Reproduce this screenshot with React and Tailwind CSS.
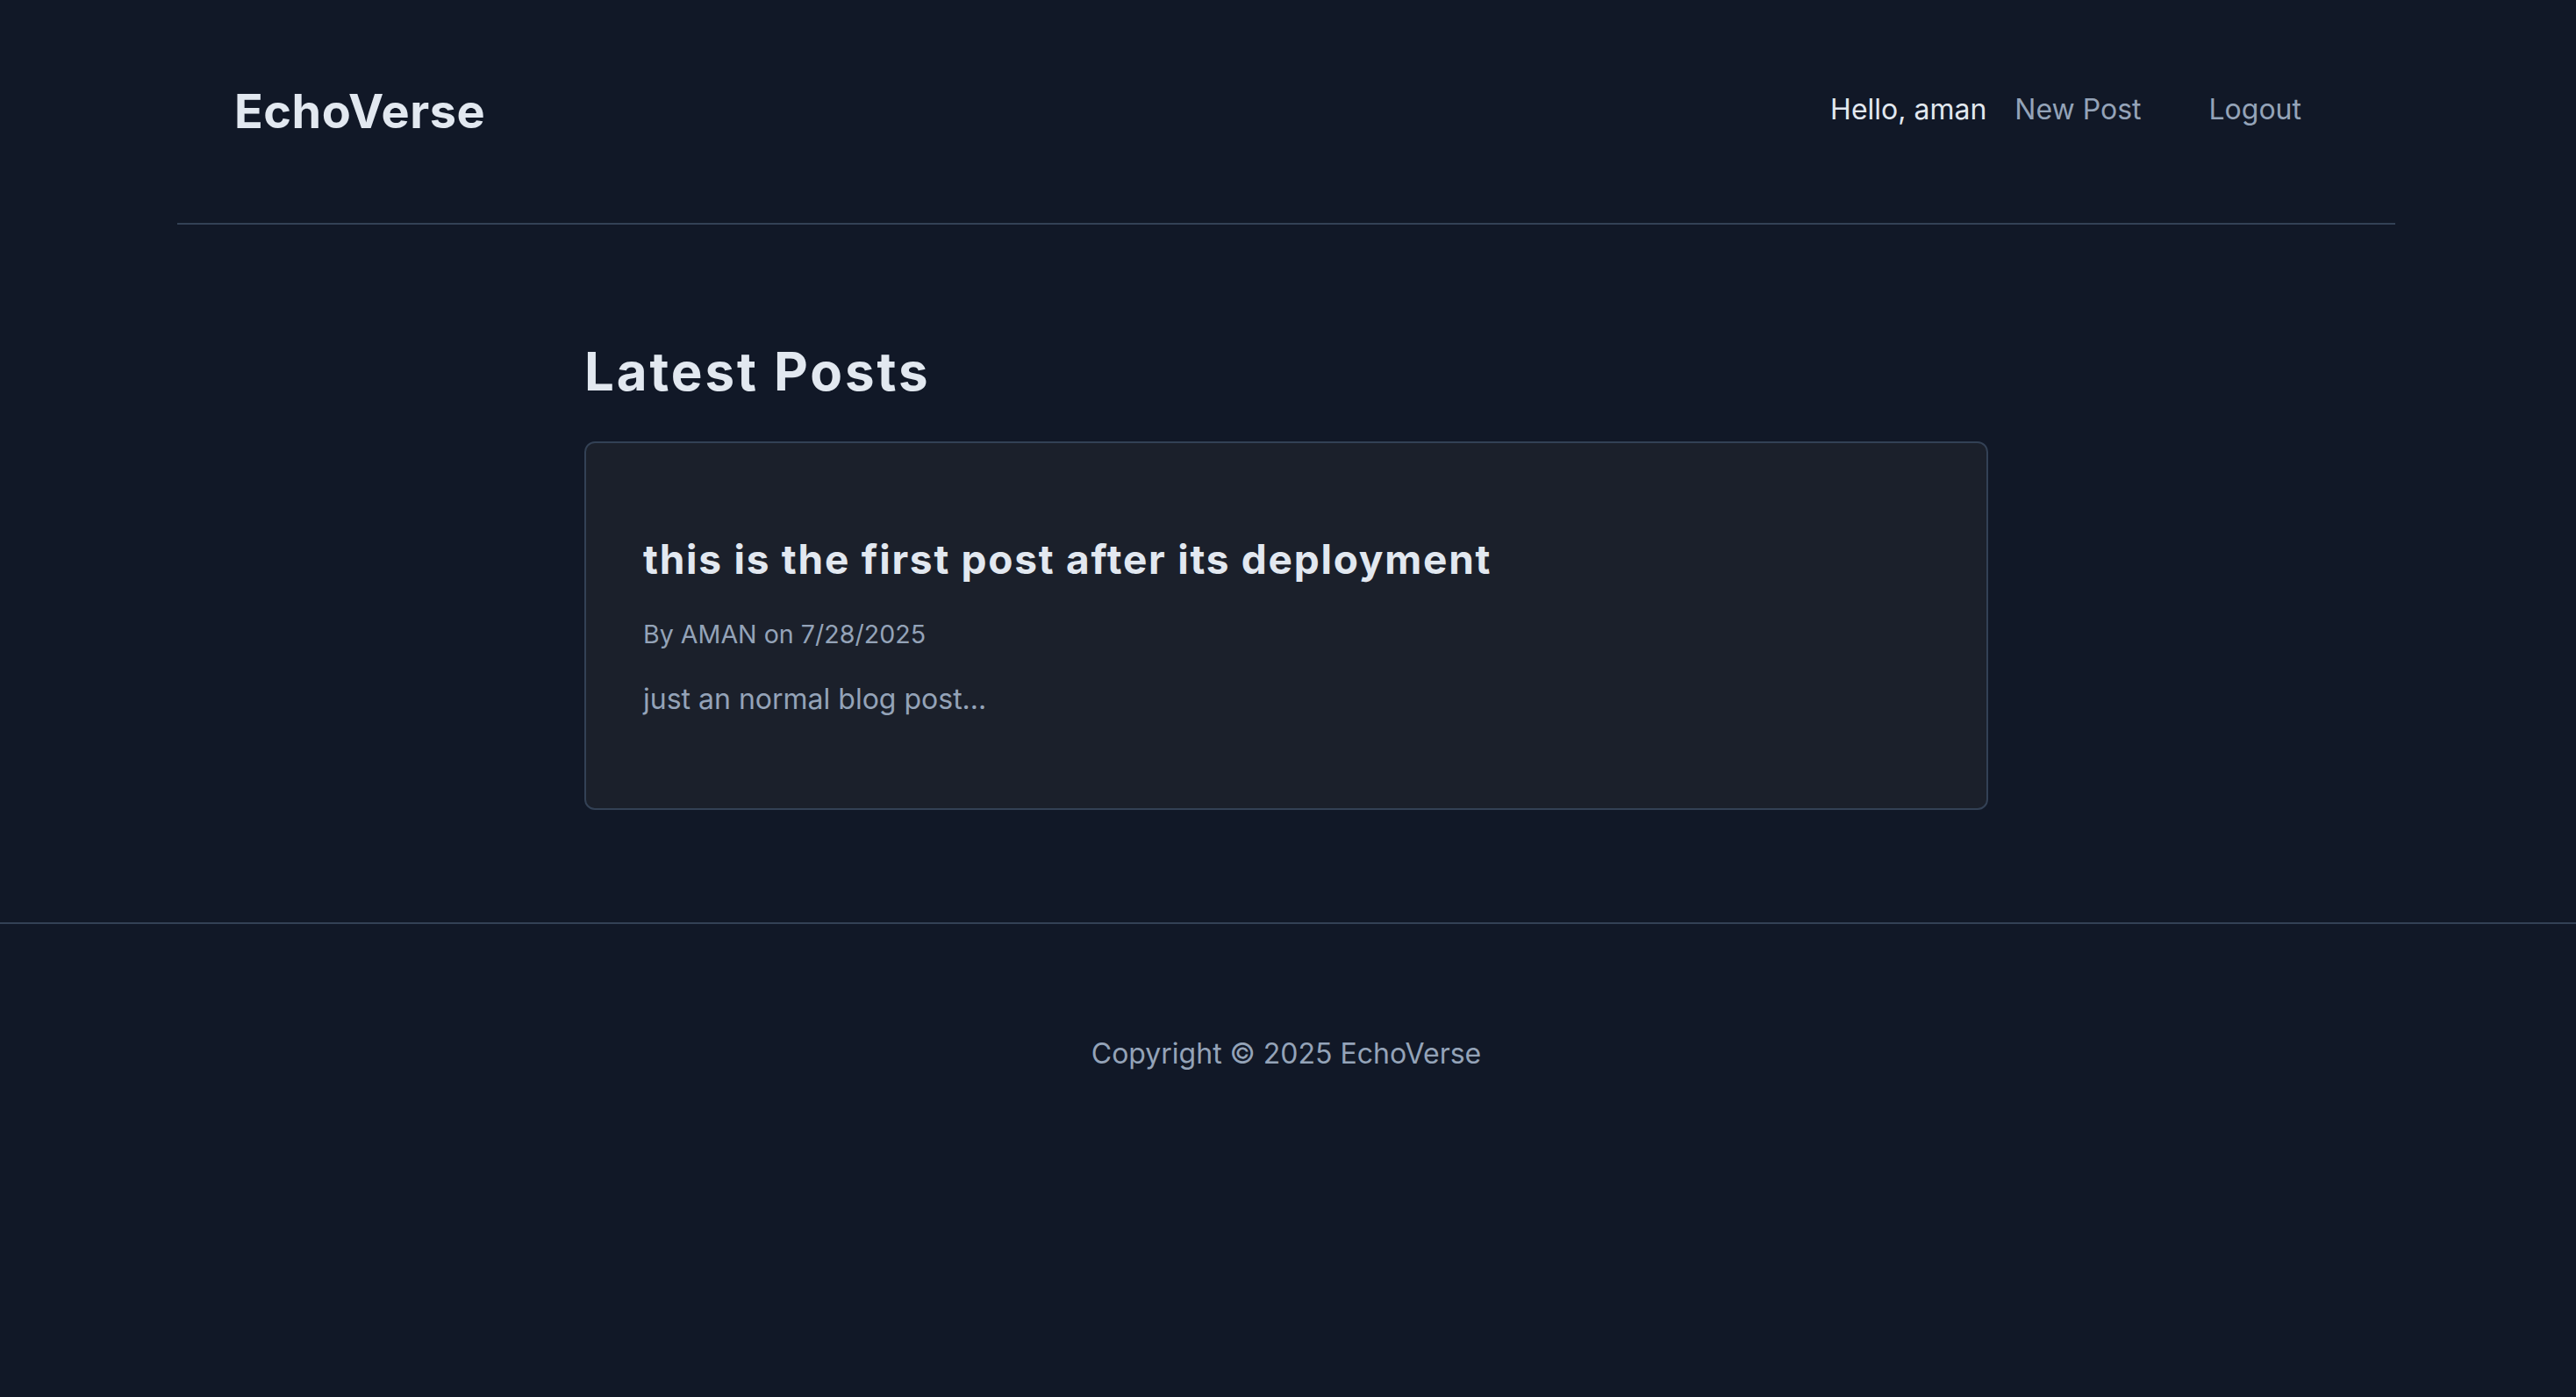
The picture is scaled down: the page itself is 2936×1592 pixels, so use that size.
import React from 'react';

const posts = [
  {
    id: 1,
    title: 'this is the first post after its deployment',
    author: 'AMAN',
    date: '7/28/2025',
    excerpt: 'just an normal blog post...',
  },
];

const App = () => {
  return (
    <div className="min-h-screen bg-[#111827] font-['Inter','Liberation_Sans',sans-serif] text-[#e2e8f0]">
      <div className="pr-[4px]">
        <header className="mx-auto flex h-[256px] w-[2528px] items-center justify-between border-b-2 border-[#334155] pl-[65px] pr-[107px]">
          <h1 className="text-[54px] font-bold leading-none tracking-[0.5px] text-[#e2e8f0]">EchoVerse</h1>
          <nav className="-mt-[4px] flex items-center text-[32px] leading-[48px]">
            <span className="text-[#e2e8f0]">Hello, aman</span>
            <a href="#" className="ml-[32px] text-[#94a3b8]">New Post</a>
            <button className="ml-[77px] text-[#94a3b8]">Logout</button>
          </nav>
        </header>

        <main className="mx-auto w-[1600px] pt-[132px] pb-[128px]">
          <h2 className="text-[60px] font-bold leading-[70px] tracking-[2.9px] text-[#e2e8f0]">Latest Posts</h2>
          <div className="mt-[45px] space-y-8">
            {posts.map(p => (
              <article key={p.id} className="rounded-[12px] border-2 border-[#334155] bg-[#1b202b] px-[65px] pt-[104px] pb-[102px]">
                <h3 className="text-[46px] font-bold leading-[56px] tracking-[1.75px] text-[#e2e8f0]">{p.title}</h3>
                <p className="mt-[38px] text-[28.6px] leading-[40px] text-[#94a3b8]">By {p.author} on {p.date}</p>
                <p className="mt-[32px] text-[32px] leading-[44px] text-[#94a3b8]">{p.excerpt}</p>
              </article>
            ))}
          </div>
        </main>
      </div>

      <footer className="border-t-2 border-[#334155] pt-[124px] pr-[4px] pb-[190px] text-center">
        <p className="text-[32px] leading-[48px] text-[#94a3b8]">Copyright © 2025 EchoVerse</p>
      </footer>
    </div>
  );
};

export default App;
